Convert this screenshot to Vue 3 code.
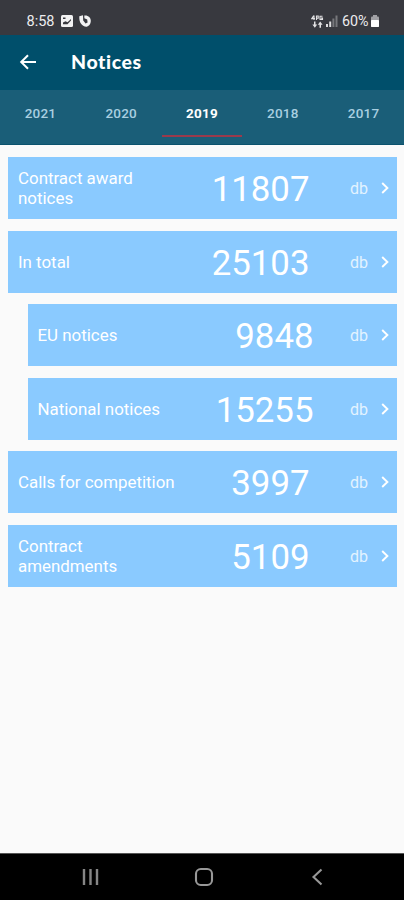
<template>
    <div class="screen">
        <div class="status-bar">
            <span class="time">8:58</span>
            <svg class="picture-icon" width="12" height="12" viewBox="0 0 12 12">
                <rect width="12" height="12" rx="1.5" fill="#f2f2f3" />
                <path d="M2 9.2V7.6L4.5 6.2L6.5 7.2L10 4V5.6L6.5 9.2Z" fill="#38393f" />
                <rect x="2" y="2.5" width="2.5" height="1.5" fill="#38393f" />
            </svg>
            <svg class="shield-icon" width="12" height="12" viewBox="0 0 12 12">
                <path d="M0.3 1.2L4 0.3L4.2 5.5L7 9L7.5 11.8C2.5 11 0 7.5 0.3 1.2Z" fill="#f2f2f3" />
                <path d="M5.3 0.5C9 0 12 2.5 11.8 6C11.7 9 10 11.5 7 11.8L6.5 8.5L8.6 7.5L8.2 4.5L5.4 3.2Z" fill="#f2f2f3" />
            </svg>
            <div class="status-right">
                <svg width="13" height="13" viewBox="0 0 13 13">
                    <g fill="none" stroke="#e2e2e4" stroke-width="1.1">
                        <path d="M2.8 0.5L0.8 3.6H4M3 0.5V5M5.5 5V1H7.2V3.2H5.5M11.5 1.3H9V4.4H11.5V3H10" />
                    </g>
                    <path d="M4.5 6.5V9.5H6.2L3.8 12.8L1.4 9.5H3V6.5ZM8.5 12.8V9.8H6.8L9.2 6.5L11.6 9.8H10V12.8Z" fill="#e2e2e4" />
                </svg>
                <svg class="signal-icon" width="12" height="12" viewBox="0 0 12 12">
                    <rect x="0" y="9" width="2" height="3" fill="#dedee0" />
                    <rect x="3.2" y="6.5" width="2" height="5.5" fill="#dedee0" />
                    <rect x="6.4" y="3.5" width="2" height="8.5" fill="#77787c" />
                    <rect x="9.5" y="0.5" width="2" height="11.5" fill="#77787c" />
                </svg>
                <span class="percent">60%</span>
                <svg class="battery-icon" width="8" height="12" viewBox="0 0 8 12">
                    <rect x="2" width="4" height="2" fill="#a0a0a4" />
                    <rect y="1.5" width="8" height="10.5" rx="1" fill="#a0a0a4" />
                    <rect y="5" width="8" height="7" rx="0.8" fill="#fff" />
                </svg>
            </div>
        </div>

        <header class="app-bar">
            <svg class="back" width="18" height="16" viewBox="0 0 18 16">
                <path d="M17 8H2.5M9 1.2L2.2 8L9 14.8" fill="none" stroke="#fff" stroke-width="2" />
            </svg>
            <h1>Notices</h1>
        </header>

        <nav class="tabs">
            <button
                v-for="year in years"
                :key="year"
                class="tab"
                :class="{ active: year === selectedYear }"
                @click="selectedYear = year"
            >
                {{ year }}
            </button>
        </nav>

        <main class="list">
            <div
                v-for="item in items"
                :key="item.label"
                class="card"
                :class="{ sub: item.sub }"
            >
                <span class="label">{{ item.label }}</span>
                <span class="count">{{ item.count }}</span>
                <span class="unit">db</span>
                <svg class="chevron" width="8" height="12" viewBox="0 0 8 12">
                    <path d="M1.2 1L6.4 6L1.2 11" fill="none" stroke="#fff" stroke-width="1.9" />
                </svg>
            </div>
        </main>

        <footer class="nav-bar">
            <svg width="18" height="18" viewBox="0 0 18 18">
                <path d="M2 1V17M8.5 1V17M15 1V17" stroke="#858585" stroke-width="2.4" />
            </svg>
            <svg class="home" width="20" height="20" viewBox="0 0 20 20">
                <rect x="2" y="2" width="16" height="16" rx="4.8" fill="none" stroke="#989898" stroke-width="2.1" />
            </svg>
            <svg width="12" height="18" viewBox="0 0 12 18">
                <path d="M10.5 1.5L2.5 9L10.5 16.5" fill="none" stroke="#989898" stroke-width="2.1" />
            </svg>
        </footer>
    </div>
</template>

<script setup>
import { ref } from 'vue';

const years = [2021, 2020, 2019, 2018, 2017];
const selectedYear = ref(2019);

const items = ref([
    { label: 'Contract award\nnotices', count: 11807 },
    { label: 'In total', count: 25103 },
    { label: 'EU notices', count: 9848, sub: true },
    { label: 'National notices', count: 15255, sub: true },
    { label: 'Calls for competition', count: 3997 },
    { label: 'Contract\namendments', count: 5109 },
]);
</script>

<style>
body {
    margin: 0;
    background: #fafafa;
}
</style>

<style scoped>
.screen {
    display: flex;
    flex-direction: column;
    width: 404px;
    height: 900px;
    overflow: hidden;
    background: #fafafa;
    font-family: Roboto, sans-serif;
    color: #fff;
}

.status-bar {
    display: flex;
    align-items: center;
    box-sizing: border-box;
    height: 34.5px;
    padding: 8px 25px 0 26.5px;
    background: #38393f;
    flex-shrink: 0;
}

.time {
    width: 28px;
    font-size: 14.5px;
    color: #ececee;
}

.picture-icon {
    margin-left: 6px;
}

.shield-icon {
    margin-left: 6px;
}

.status-right {
    display: flex;
    align-items: center;
    margin-left: auto;
}

.signal-icon {
    margin-left: 2px;
}

.percent {
    width: 27px;
    margin-left: 4px;
    font-size: 14.3px;
    color: #ececee;
}

.battery-icon {
    margin-left: 2px;
}

.app-bar {
    display: flex;
    align-items: center;
    height: 55.5px;
    padding-left: 19px;
    background: #004f6b;
    flex-shrink: 0;
}

.app-bar h1 {
    margin: 0 0 0 34px;
    font-family: Lato, sans-serif;
    font-size: 19.5px;
    font-weight: 900;
    line-height: 24px;
    letter-spacing: 0.6px;
}

.tabs {
    display: flex;
    height: 54.5px;
    background: #1a5e78;
    border-bottom: 1px solid #0b526d;
    box-sizing: border-box;
    flex-shrink: 0;
}

.tab {
    flex: 1;
    box-sizing: border-box;
    height: 47px;
    padding: 1px 0 0;
    border: none;
    border-bottom: 2px solid transparent;
    background: none;
    font-family: inherit;
    font-size: 13.5px;
    font-weight: 500;
    letter-spacing: 0.2px;
    color: #a9cfe0;
    cursor: pointer;
}

.tab.active {
    border-bottom-color: #9a3a4c;
    font-weight: 700;
    color: #fff;
}

.list {
    display: flex;
    flex-direction: column;
    gap: 11.6px;
    flex: 1;
    padding: 12.5px 7px 0 8px;
}

.card {
    display: flex;
    align-items: center;
    box-sizing: border-box;
    height: 62px;
    padding: 0 8px 0 10px;
    background: #8acaff;
}

.card.sub {
    margin-left: 19.5px;
}

.label {
    flex: 1;
    font-size: 16.9px;
    line-height: 20px;
    white-space: pre-line;
}

.count {
    width: 110px;
    padding-top: 2px;
    margin-right: 40.5px;
    font-size: 34.8px;
    line-height: 42px;
    text-align: right;
}

.card.sub .count {
    margin-right: 36.5px;
}

.unit {
    width: 19px;
    padding-top: 1px;
    font-size: 16px;
    color: #e3f3ff;
}

.chevron {
    margin-left: 12px;
}

.nav-bar {
    display: flex;
    align-items: center;
    justify-content: space-between;
    box-sizing: border-box;
    height: 47px;
    padding: 0 81px 0 82px;
    border-top: 1px solid #555;
    background: #000;
    flex-shrink: 0;
}

.home {
    margin-right: 3px;
}
</style>
